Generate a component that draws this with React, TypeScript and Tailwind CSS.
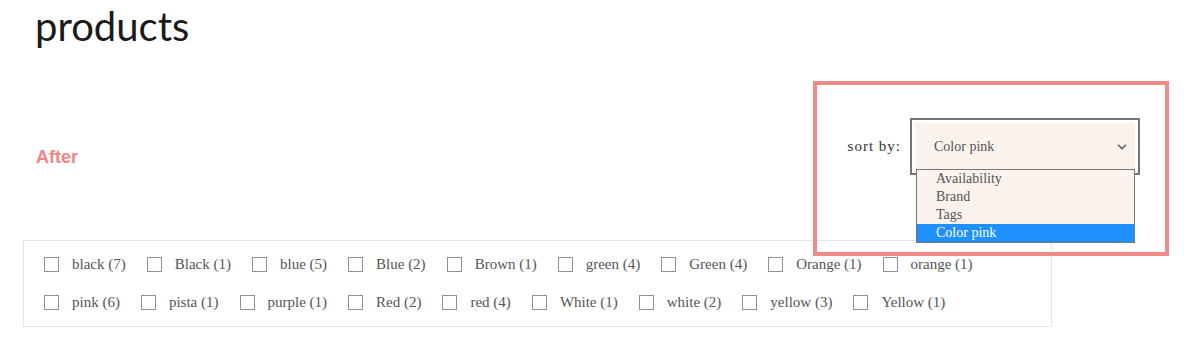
import { ChevronDown } from "lucide-react";

const filters = [
  "black (7)", "Black (1)", "blue (5)", "Blue (2)", "Brown (1)", "green (4)", "Green (4)", "Orange (1)", "orange (1)",
  "pink (6)", "pista (1)", "purple (1)", "Red (2)", "red (4)", "White (1)", "white (2)", "yellow (3)", "Yellow (1)",
];

const options = ["Availability", "Brand", "Tags", "Color pink"];

const serif = "font-['Liberation_Serif','Times_New_Roman',serif]";

const SortSelect = () => (
  <div className="relative">
    <div className="w-[230px] h-[57px] border-2 border-[#767676] bg-white p-[3px]">
      <div className="flex items-center justify-between h-full bg-[#faf3ed] pl-[19px] pr-[6px]">
        <span className={`${serif} text-[14px] text-[#555]`}>Color pink</span>
        <ChevronDown size={14} strokeWidth={3} className="text-[#666]" />
      </div>
    </div>
    <ul className={`absolute left-[6px] top-[51px] w-[219px] border border-[#777] bg-[#faf3ed] ${serif} text-[14px] leading-[17px]`}>
      {options.map((o) => (
        <li
          key={o}
          className={`h-[18px] pl-[19px] ${o === "Color pink" ? "bg-[#1e90ff] text-white" : "text-[#555]"}`}
        >
          {o}
        </li>
      ))}
    </ul>
  </div>
);

export default function App() {
  return (
    <div className="relative w-[1186px] h-[343px] bg-white overflow-hidden">
      <h1 className="pl-[35px] pt-[7px] font-['Lato',sans-serif] text-[40px] leading-[39px] text-[#1a1a1a]">products</h1>

      <div className="flex justify-between items-start pl-[36px] pr-[46px]">
        <p className="mt-[102px] font-['Liberation_Sans',Arial,sans-serif] font-bold text-[18px] leading-[18px] text-[#f38484]">
          After
        </p>
        <div className="mt-[72px] flex items-center gap-[9px]">
          <span className={`${serif} text-[15px] tracking-[1px] text-[#333]`}>sort by:</span>
          <SortSelect />
        </div>
      </div>

      <div className="ml-[23px] mt-[65px] w-[1029px] border border-[#e6e6e6] px-[20px] pt-[4px] pb-[5px]">
        <div className="flex flex-wrap">
          {filters.map((f) => (
            <label key={f} className="flex items-center h-[38px] mr-[21px]">
              <span className="w-[15px] h-[15px] border border-[#919191] bg-white" />
              <span className={`ml-[13px] ${serif} text-[15px] text-[#555]`}>{f}</span>
            </label>
          ))}
        </div>
      </div>

      <div className="absolute left-[813px] top-[81px] w-[356px] h-[175px] border-4 border-[#f28a8a]" />
    </div>
  );
}
